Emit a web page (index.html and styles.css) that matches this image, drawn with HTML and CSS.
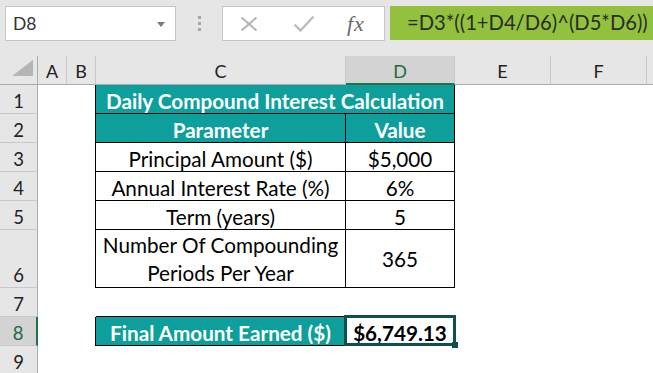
FILE: index.html
```html
<!DOCTYPE html>
<html>
<head>
<meta charset="utf-8">
<link rel="stylesheet" href="styles.css">
</head>
<body>
<div class="app">
  <div class="fbar">
    <div class="namebox">
      <span class="name">D8</span>
      <svg class="caret" width="8" height="5" viewBox="0 0 8 5"><path d="M0 0H8L4 5Z" fill="#7a7a7a"/></svg>
    </div>
    <div class="dots"><i></i><i></i><i></i></div>
    <div class="btnbox">
      <svg class="ico" width="18" height="16" viewBox="0 0 18 16"><path d="M1.5 1.5L16.5 14.5M16.5 1.5L1.5 14.5" stroke="#b3b3b3" stroke-width="2" fill="none"/></svg>
      <svg class="ico" width="22" height="18" viewBox="0 0 22 18"><path d="M1.5 9.5L7.5 15.5L20.5 1.5" stroke="#bdbdbd" stroke-width="2.4" fill="none"/></svg>
      <span class="fx">fx</span>
    </div>
    <div class="formula">=D3*((1+D4/D6)^(D5*D6))</div>
  </div>

  <div class="sheet">
    <div class="ch corner"><svg width="21" height="16" viewBox="0 0 21 16"><path d="M21 0V16H0Z" fill="#b5b5b5"/></svg></div>
    <div class="ch">A</div>
    <div class="ch">B</div>
    <div class="ch">C</div>
    <div class="ch sel">D</div>
    <div class="ch">E</div>
    <div class="ch">F</div>
    <div class="ch last"></div>

    <div class="rh">1</div><div class="x"></div><div class="x bl"></div>
    <div class="t th span2">Daily Compound Interest Calculation</div>
    <div class="x"></div><div class="x"></div><div class="x"></div>

    <div class="rh">2</div><div class="x"></div><div class="x bl"></div>
    <div class="t th">Parameter</div><div class="t th">Value</div>
    <div class="x"></div><div class="x"></div><div class="x"></div>

    <div class="rh">3</div><div class="x"></div><div class="x bl"></div>
    <div class="t">Principal Amount ($)</div><div class="t">$5,000</div>
    <div class="x"></div><div class="x"></div><div class="x"></div>

    <div class="rh">4</div><div class="x"></div><div class="x bl"></div>
    <div class="t">Annual Interest Rate (%)</div><div class="t">6%</div>
    <div class="x"></div><div class="x"></div><div class="x"></div>

    <div class="rh">5</div><div class="x"></div><div class="x bl"></div>
    <div class="t">Term (years)</div><div class="t">5</div>
    <div class="x"></div><div class="x"></div><div class="x"></div>

    <div class="rh rh-tall">6</div><div class="x"></div><div class="x bl"></div>
    <div class="t wrap">Number Of Compounding<br>Periods Per Year</div><div class="t mid">365</div>
    <div class="x"></div><div class="x"></div><div class="x"></div>

    <div class="rh">7</div><div class="x"></div><div class="x"></div>
    <div class="x bb"></div><div class="x bb"></div>
    <div class="x"></div><div class="x"></div><div class="x"></div>

    <div class="rh rh-sel">8</div><div class="x"></div><div class="x bl"></div>
    <div class="t th">Final Amount Earned ($)</div><div class="t bold active">$6,749.13</div>
    <div class="x"></div><div class="x"></div><div class="x"></div>

    <div class="rh">9</div><div class="x"></div><div class="x"></div>
    <div class="x"></div><div class="x"></div>
    <div class="x"></div><div class="x"></div><div class="x"></div>
  </div>
</div>
</body>
</html>
```

FILE: styles.css
```css
html, body {
  margin: 0;
  padding: 0;
  background: #ffffff;
  overflow: hidden;
}
.app {
  width: 653px;
  height: 373px;
  overflow: hidden;
  font-family: Lato, "Open Sans", sans-serif;
  color: #000;
}
.fbar {
  height: 56px;
  box-sizing: border-box;
  background: #e6e6e6;
  display: flex;
  align-items: flex-start;
  padding: 6px 0 0 5px;
}
.namebox {
  width: 171px;
  height: 35px;
  box-sizing: border-box;
  background: #fff;
  border: 1px solid #c6c6c6;
  display: flex;
  align-items: center;
  justify-content: space-between;
  padding: 0 10px 0 7px;
}
.name {
  font-size: 17.5px;
  color: #333;
  line-height: 20px;
}
.caret { margin-top: 1px; }
.dots {
  width: 46px;
  height: 35px;
  display: flex;
  flex-direction: column;
  align-items: center;
  justify-content: center;
  gap: 3px;
}
.dots i {
  display: block;
  width: 3px;
  height: 3px;
  background: #a6a6a6;
}
.btnbox {
  width: 163px;
  height: 35px;
  box-sizing: border-box;
  background: #fff;
  border: 1px solid #c6c6c6;
  display: flex;
  align-items: center;
  padding-left: 17px;
}
.btnbox .ico:nth-child(1) { margin-right: 35px; }
.btnbox .ico:nth-child(2) { margin-right: 32px; }
.fx {
  font-family: "Liberation Serif", serif;
  font-style: italic;
  font-size: 22px;
  color: #6a6a6a;
  line-height: 20px;
  letter-spacing: 1px;
}
.formula {
  margin-left: 5px;
  flex: 1;
  height: 34px;
  background: #92c13d;
  color: #2b2b2b;
  font-size: 20.2px;
  line-height: 32px;
  padding-left: 17px;
  white-space: nowrap;
  overflow: hidden;
}
.sheet {
  display: grid;
  grid-template-columns: 38px 29px 29px 250px 109px 96px 96px 1fr;
  grid-template-rows: repeat(6, 29px) 58px 29px 29px 29px;
  font-size: 20.7px;
}
.sheet > div {
  box-sizing: border-box;
  text-align: center;
  white-space: nowrap;
}
.ch {
  background: #e6e6e6;
  border-right: 1px solid #c8c8c8;
  border-bottom: 1px solid #ababab;
  font-size: 18px;
  color: #222;
  padding-top: 3px;
  line-height: 24px;
}
.ch.corner {
  display: flex;
  align-items: flex-end;
  justify-content: flex-end;
  padding: 0 4px 8px 0;
  border-right-color: #ababab;
}
.ch.sel {
  background: #d3d3d3;
  border-bottom: 2px solid #217346;
  color: #1d6b40;
}
.ch.last { border-right: none; }
.rh {
  background: #e6e6e6;
  border-right: 1px solid #ababab;
  border-bottom: 1px solid #c8c8c8;
  font-size: 18.5px;
  color: #222;
  padding-top: 4px;
  line-height: 24px;
}
.rh-tall {
  padding-top: 33px;
}
.rh-sel {
  background: #d3d3d3;
  border-right: 2px solid #217346;
  color: #1d6b40;
}
.x { background: #fff; }
.bl { border-right: 1px solid #000; }
.bb { border-bottom: 1px solid #000; }
.t {
  background: #fff;
  border-right: 1px solid #000;
  border-bottom: 1px solid #000;
  padding-top: 4px;
  line-height: 24px;
}
.span2 { grid-column: span 2; }
.th {
  background: #0e9f9c;
  color: #fff;
  font-weight: 700;
}
.bold { font-weight: 700; }
.wrap {
  padding-top: 1px;
  line-height: 28px;
}
.mid {
  padding-top: 0;
  display: flex;
  align-items: center;
  justify-content: center;
}
.active { position: relative; }
.active::after {
  content: "";
  position: absolute;
  left: -2px;
  top: -2px;
  right: -2px;
  bottom: -1px;
  border: 3px solid #10504c;
}
.active::before {
  content: "";
  position: absolute;
  right: -4px;
  bottom: -3px;
  width: 6px;
  height: 6px;
  background: #10504c;
  z-index: 1;
}
```
